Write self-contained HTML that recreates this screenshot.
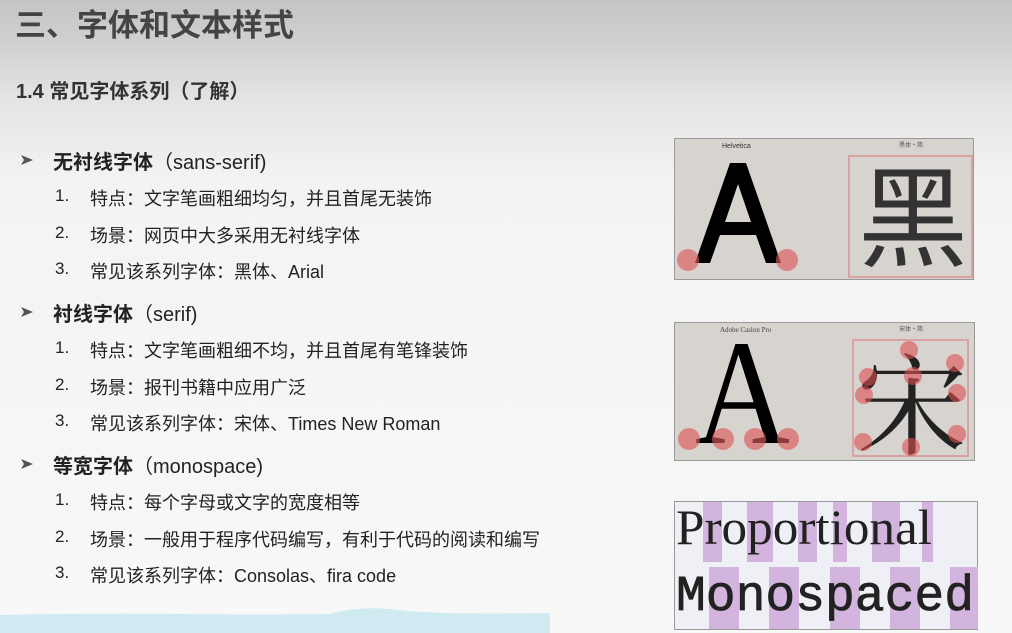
<!DOCTYPE html>
<html><head><meta charset="utf-8"><style>
*{margin:0;padding:0;box-sizing:border-box}
body{width:1012px;height:633px;overflow:hidden;position:relative;font-family:"Liberation Sans","Noto Sans CJK SC",sans-serif;background:linear-gradient(#c4c4c4 0px,#d0d0d0 42px,#e4e4e4 100px,#f3f3f3 180px,#f8f8f8 633px);color:#222}
.t{position:absolute;white-space:nowrap}
h1{position:absolute;left:15px;top:0px;font-size:31px;font-weight:bold;color:#444}
h2{position:absolute;left:16px;top:75px;font-size:20px;font-weight:bold;color:#333}
.b{font-size:20px;left:53px}
.b b{font-weight:bold}
.arr{position:absolute;left:20px}
.n{left:55px;font-size:17px;color:#222}
.s{left:90px;font-size:18px;color:#222}
svg.box{position:absolute}
.sans{font-family:"Liberation Sans",sans-serif}
.serif{font-family:"Liberation Serif",serif}
</style></head><body>
<h1>三、字体和文本样式</h1>
<h2>1.4 常见字体系列（了解）</h2>

<svg class="arr" style="top:153px" width="14" height="14"><path d="M1 2 L13 7 L1 12 L4 7Z" fill="#555"/></svg>
<div class="t b" style="top:146px"><b>无衬线字体</b>（sans-serif)</div>
<div class="t n" style="top:186px">1.</div><div class="t s" style="top:185px">特点：文字笔画粗细均匀，并且首尾无装饰</div>
<div class="t n" style="top:223px">2.</div><div class="t s" style="top:222px">场景：网页中大多采用无衬线字体</div>
<div class="t n" style="top:259px">3.</div><div class="t s" style="top:258px">常见该系列字体：黑体、Arial</div>

<svg class="arr" style="top:305px" width="14" height="14"><path d="M1 2 L13 7 L1 12 L4 7Z" fill="#555"/></svg>
<div class="t b" style="top:298px"><b>衬线字体</b>（serif)</div>
<div class="t n" style="top:338px">1.</div><div class="t s" style="top:337px">特点：文字笔画粗细不均，并且首尾有笔锋装饰</div>
<div class="t n" style="top:375px">2.</div><div class="t s" style="top:374px">场景：报刊书籍中应用广泛</div>
<div class="t n" style="top:411px">3.</div><div class="t s" style="top:410px">常见该系列字体：宋体、Times New Roman</div>

<svg class="arr" style="top:457px" width="14" height="14"><path d="M1 2 L13 7 L1 12 L4 7Z" fill="#555"/></svg>
<div class="t b" style="top:450px"><b>等宽字体</b>（monospace)</div>
<div class="t n" style="top:490px">1.</div><div class="t s" style="top:489px">特点：每个字母或文字的宽度相等</div>
<div class="t n" style="top:527px">2.</div><div class="t s" style="top:526px">场景：一般用于程序代码编写，有利于代码的阅读和编写</div>
<div class="t n" style="top:563px">3.</div><div class="t s" style="top:562px">常见该系列字体：Consolas、fira code</div>

<svg style="position:absolute;left:0;top:605px" width="560" height="28"><path d="M0 10 Q100 8 180 9 T330 9 Q360 0 400 5 T550 8 L550 28 L0 28Z" fill="#cfeaf1"/></svg>

<svg class="box" style="left:674px;top:138px" width="300" height="142">
 <rect x="0.5" y="0.5" width="299" height="141" fill="#d7d3cf" stroke="#999"/>
 <text x="48" y="10" font-size="7" fill="#333" class="sans">Helvetica</text>
 <text x="225" y="9" font-size="6" fill="#555" style="font-family:'Noto Sans CJK SC',sans-serif">黑体·简</text>
 <path d="M21 125 L56 25 L72 25 L107 125 L92 125 L82 97 L46 97 L36 125Z M51 84 L77 84 L64 46Z" fill="#000" fill-rule="evenodd"/>
 <circle cx="14" cy="122" r="11" fill="rgba(220,90,90,.65)"/>
 <circle cx="113" cy="122" r="11" fill="rgba(220,90,90,.65)"/>
 <rect x="175" y="18" width="123" height="121" fill="none" stroke="#d9a3a3" stroke-width="2"/>
 <text x="184" y="120" font-size="110" fill="#333" style="font-family:'Noto Sans CJK SC',sans-serif">黑</text>
</svg>

<svg class="box" style="left:674px;top:322px" width="301" height="139">
 <rect x="0.5" y="0.5" width="300" height="138" fill="#d7d3cf" stroke="#999"/>
 <text x="46" y="10" font-size="7" fill="#444" class="serif">Adobe Caslon Pro</text>
 <text x="225" y="9" font-size="6" fill="#555" style="font-family:'Noto Sans CJK SC',sans-serif">宋体·简</text>
 <text x="21" y="121" font-size="150" class="serif" textLength="95" lengthAdjust="spacingAndGlyphs">A</text>
 <g fill="rgba(220,90,90,.65)">
 <circle cx="15" cy="117" r="11"/><circle cx="49" cy="117" r="11"/><circle cx="81" cy="117" r="11"/><circle cx="114" cy="117" r="11"/>
 </g>
 <rect x="179" y="18" width="115" height="116" fill="none" stroke="#d9a3a3" stroke-width="2"/>
 <text x="183" y="124" font-size="110" fill="#222" style="font-family:'Noto Serif CJK SC',serif">宋</text>
 <g fill="rgba(220,80,80,.6)">
 <circle cx="235" cy="28" r="9"/><circle cx="281" cy="41" r="9"/><circle cx="194" cy="55" r="9"/><circle cx="239" cy="54" r="9"/><circle cx="190" cy="73" r="9"/><circle cx="283" cy="71" r="9"/><circle cx="189" cy="120" r="9"/><circle cx="237" cy="125" r="9"/><circle cx="283" cy="112" r="9"/>
 </g>
</svg>

<svg class="box" style="left:674px;top:501px" width="304" height="129">
 <rect x="0.5" y="0.5" width="303" height="128" fill="#eef0f6" stroke="#999"/>
 <g fill="#d3b4de">
 <rect x="29" y="1" width="19" height="60"/><rect x="73" y="1" width="26" height="60"/><rect x="124" y="1" width="19" height="60"/><rect x="159" y="1" width="14" height="60"/><rect x="198" y="1" width="28" height="60"/><rect x="248" y="1" width="11" height="60"/>
 <rect x="35" y="66" width="30" height="62"/><rect x="95" y="66" width="30" height="62"/><rect x="156" y="66" width="30" height="62"/><rect x="216" y="66" width="30" height="62"/><rect x="276" y="66" width="28" height="62"/>
 </g>
 <text x="2" y="43" font-size="50" fill="#222" class="serif" textLength="256" lengthAdjust="spacingAndGlyphs">Proportional</text>
 <text x="2" y="109" font-size="50" fill="#222" stroke="#222" stroke-width="0.8" style="font-family:'Liberation Mono',monospace" textLength="298" lengthAdjust="spacingAndGlyphs">Monospaced</text>
</svg>
</body></html>
